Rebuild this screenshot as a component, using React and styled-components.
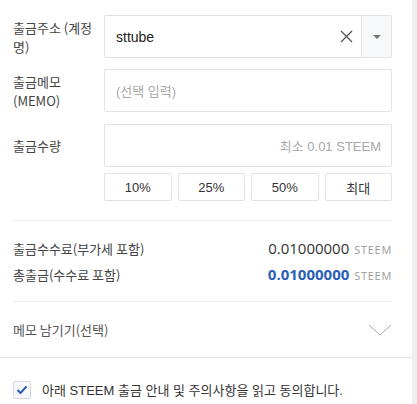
import React from "react";
import styled, { createGlobalStyle } from "styled-components";

const Global = createGlobalStyle`
  html, body { margin: 0; padding: 0; background: #fff; }
  body { font-family: "Open Sans", "Noto Sans CJK KR", sans-serif; }
  * { box-sizing: border-box; }
`;

const Page = styled.div`
  display: flex;
  width: 417px;
  height: 404px;
  overflow: hidden;
`;

const Main = styled.div`
  flex: 1;
  display: flex;
  flex-direction: column;
`;

const Strip = styled.div`
  width: 5px;
  background: #eceef1;
`;

const Section = styled.div`
  display: flex;
  flex-direction: column;
  padding: ${(p) => p.$pad || "0 20px 0 13px"};
`;

const FormRow = styled.div`
  display: flex;
  align-items: center;
  margin-top: ${(p) => p.$mt || 0}px;
`;

const Label = styled.div`
  width: 91px;
  flex-shrink: 0;
  padding-right: 10px;
  font-family: "Noto Sans CJK KR", sans-serif;
  font-size: 13px;
  line-height: 19px;
  color: #444;
`;

const Field = styled.div`
  flex: 1;
  height: 43px;
  display: flex;
  align-items: center;
  border: 1px solid #e2e2e2;
  border-radius: 2px;
  background: #fff;
  overflow: hidden;
`;

const FieldText = styled.div`
  flex: 1;
  padding: 0 10px 0 11px;
  font-family: "Liberation Sans", "Noto Sans CJK KR", sans-serif;
  font-size: ${(p) => (p.$placeholder ? 13 : 14)}px;
  color: ${(p) => (p.$placeholder ? "#a9a9a9" : "#222")};
  text-align: ${(p) => (p.$right ? "right" : "left")};
  white-space: nowrap;
`;

const ClearBtn = styled.div`
  width: 30px;
  display: flex;
  align-items: center;
  justify-content: center;
`;

const Caret = styled.div`
  width: 30px;
  align-self: stretch;
  display: flex;
  align-items: center;
  justify-content: center;
  background: #f7f8fa;
  border-left: 1px solid #e6e6e6;
`;

const Triangle = styled.span`
  width: 0;
  height: 0;
  border-left: 4px solid transparent;
  border-right: 4px solid transparent;
  border-top: 4px solid #777;
`;

const Buttons = styled.div`
  margin-left: 91px;
  margin-top: 6px;
  display: grid;
  grid-template-columns: repeat(4, 1fr);
  gap: 6px;
`;

const PctButton = styled.button`
  height: 28px;
  border: 1px solid #e3e3e3;
  border-radius: 2px;
  background: #fff;
  font-family: "Liberation Sans", "Noto Sans CJK KR", sans-serif;
  font-size: 13px;
  color: #333;
  padding: 0;
`;

const Divider = styled.div`
  height: 1px;
  background: ${(p) => p.$color || "#efefef"};
  margin-top: ${(p) => p.$mt || 0}px;
`;

const InfoList = styled.div`
  display: flex;
  flex-direction: column;
  padding-top: 14px;
`;

const InfoRow = styled.div`
  display: flex;
  align-items: center;
  justify-content: space-between;
  height: 26px;
`;

const InfoLabel = styled.span`
  font-family: "Noto Sans CJK KR", sans-serif;
  font-size: 13px;
  color: #444;
`;

const Amount = styled.span`
  font-family: "Open Sans", sans-serif;
  font-size: 15px;
  font-weight: ${(p) => (p.$strong ? 700 : 400)};
  color: ${(p) => (p.$strong ? "#2b5fb8" : "#333")};
`;

const Unit = styled.span`
  font-family: "Open Sans", sans-serif;
  font-size: 11px;
  color: #9a9a9a;
  letter-spacing: 0.7px;
  margin-left: 5px;
`;

const MemoRow = styled.div`
  display: flex;
  align-items: center;
  justify-content: space-between;
  height: 55px;
`;

const MemoLabel = styled.span`
  font-family: "Noto Sans CJK KR", sans-serif;
  font-size: 13px;
  color: #555;
`;

const AgreeRow = styled.label`
  display: flex;
  align-items: center;
  gap: 11px;
  padding: 22px 0 0 13px;
`;

const Box = styled.span`
  width: 18px;
  height: 18px;
  border: 1px solid #d4d8de;
  border-radius: 2px;
  background: #f6f8fb;
  display: flex;
  align-items: center;
  justify-content: center;
`;

const AgreeText = styled.span`
  font-family: "Liberation Sans", "Noto Sans CJK KR", sans-serif;
  font-size: 13px;
  color: #333;
`;

export default function App() {
  return (
    <Page>
      <Global />
      <Main>
        <Section $pad="15px 20px 0 13px">
          <FormRow>
            <Label>출금주소 (계정명)</Label>
            <Field>
              <FieldText>sttube</FieldText>
              <ClearBtn>
                <svg width="13" height="13" viewBox="0 0 13 13">
                  <path d="M1 1L12 12M12 1L1 12" stroke="#555" strokeWidth="1.3" fill="none" />
                </svg>
              </ClearBtn>
              <Caret>
                <Triangle />
              </Caret>
            </Field>
          </FormRow>
          <FormRow $mt={11}>
            <Label>출금메모 (MEMO)</Label>
            <Field>
              <FieldText $placeholder>(선택 입력)</FieldText>
            </Field>
          </FormRow>
          <FormRow $mt={12}>
            <Label>출금수량</Label>
            <Field>
              <FieldText $placeholder $right>최소 0.01 STEEM</FieldText>
            </Field>
          </FormRow>
          <Buttons>
            <PctButton>10%</PctButton>
            <PctButton>25%</PctButton>
            <PctButton>50%</PctButton>
            <PctButton>최대</PctButton>
          </Buttons>
          <Divider $mt={19} />
          <InfoList>
            <InfoRow>
              <InfoLabel>출금수수료(부가세 포함)</InfoLabel>
              <span>
                <Amount>0.01000000</Amount>
                <Unit>STEEM</Unit>
              </span>
            </InfoRow>
            <InfoRow>
              <InfoLabel>총출금(수수료 포함)</InfoLabel>
              <span>
                <Amount $strong>0.01000000</Amount>
                <Unit>STEEM</Unit>
              </span>
            </InfoRow>
          </InfoList>
          <Divider $mt={14} />
          <MemoRow>
            <MemoLabel>메모 남기기(선택)</MemoLabel>
            <svg width="24" height="12" viewBox="0 0 24 12">
              <path d="M1 1L12 11L23 1" stroke="#aaa" strokeWidth="1" fill="none" />
            </svg>
          </MemoRow>
        </Section>
        <Divider $color="#e3e3e3" />
        <AgreeRow>
          <Box>
            <svg width="12" height="10" viewBox="0 0 12 10">
              <path d="M1.5 5L4.5 8L10.5 1.5" stroke="#2b5fb8" strokeWidth="2" fill="none" />
            </svg>
          </Box>
          <AgreeText>아래 STEEM 출금 안내 및 주의사항을 읽고 동의합니다.</AgreeText>
        </AgreeRow>
      </Main>
      <Strip />
    </Page>
  );
}
